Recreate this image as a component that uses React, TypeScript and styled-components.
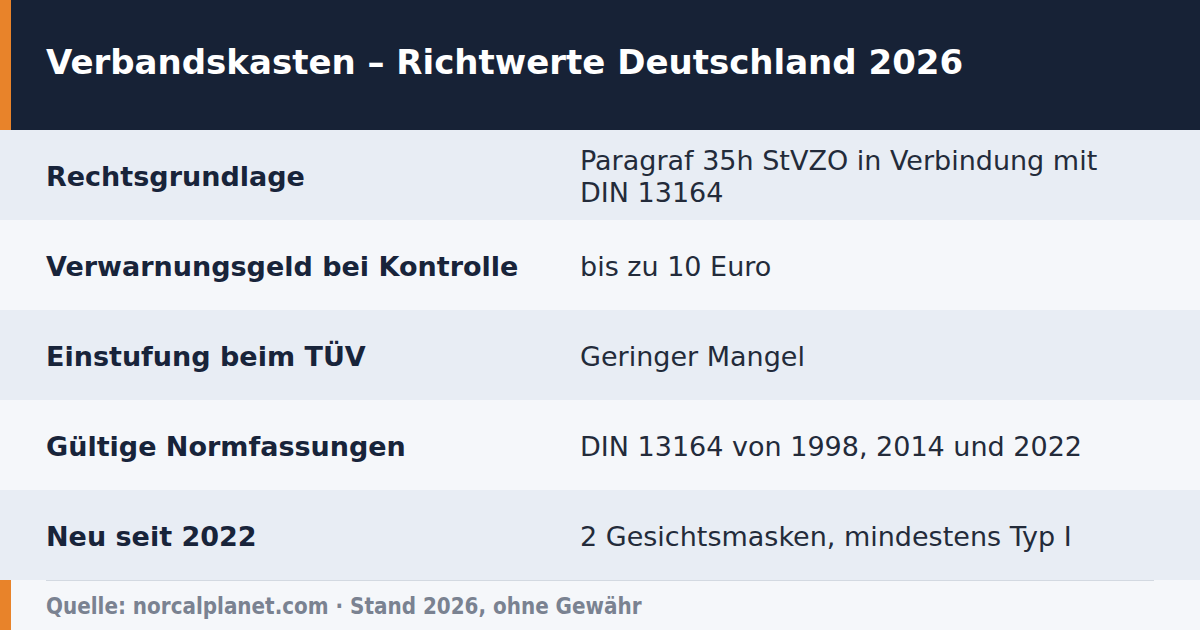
import React from "react";
import styled, { createGlobalStyle } from "styled-components";

const rows: [string, string][] = [
  ["Rechtsgrundlage", "Paragraf 35h StVZO in Verbindung mit DIN 13164"],
  ["Verwarnungsgeld bei Kontrolle", "bis zu 10 Euro"],
  ["Einstufung beim TÜV", "Geringer Mangel"],
  ["Gültige Normfassungen", "DIN 13164 von 1998, 2014 und 2022"],
  ["Neu seit 2022", "2 Gesichtsmasken, mindestens Typ I"],
];

export default function App() {
  return (
    <>
      <GlobalStyle />
      <Card>
        <Header>
          <Title>Verbandskasten – Richtwerte Deutschland 2026</Title>
        </Header>
        {rows.map(([label, value], i) => (
          <Row key={label} odd={i % 2 === 0}>
            <Label>{label}</Label>
            <Value>{value}</Value>
          </Row>
        ))}
        <Footer>
          <Source>Quelle: norcalplanet.com · Stand 2026, ohne Gewähr</Source>
        </Footer>
      </Card>
    </>
  );
}

const GlobalStyle = createGlobalStyle`
  body {
    margin: 0;
    font-family: "DejaVu Sans", sans-serif;
    background: #f5f7fa;
  }
`;

const Card = styled.div`
  width: 1200px;
  height: 630px;
  display: flex;
  flex-direction: column;
  overflow: hidden;
`;

const Header = styled.div`
  height: 130px;
  display: flex;
  align-items: center;
  background: #172236;
  border-left: 11px solid #e8832a;
  padding-left: 35px;
  box-sizing: border-box;
`;

const Title = styled.h1`
  margin: 0;
  font-size: 34px;
  font-weight: 700;
  color: #ffffff;
  padding-bottom: 6px;
`;

const Row = styled.div<{ odd: boolean }>`
  height: 90px;
  display: grid;
  grid-template-columns: 534px 1fr;
  align-items: center;
  padding-left: 46px;
  padding-right: 80px;
  box-sizing: border-box;
  background: ${({ odd }) => (odd ? "#e8edf4" : "#f5f7fa")};
`;

const Label = styled.div`
  font-size: 27px;
  font-weight: 700;
  color: #18243a;
  padding-top: 2px;
`;

const Value = styled.div`
  font-size: 27px;
  line-height: 32px;
  color: #232b3a;
  padding-top: 4px;
`;

const Footer = styled.div`
  flex: 1;
  display: flex;
  align-items: center;
  border-left: 11px solid #e8832a;
  padding-left: 35px;
  position: relative;
  &::before {
    content: "";
    position: absolute;
    top: 0;
    left: 35px;
    right: 46px;
    height: 1px;
    background: #d3d9e1;
  }
`;

const Source = styled.div`
  font-size: 22.2px;
  font-weight: 700;
  font-stretch: condensed;
  font-family: "DejaVu Sans Condensed", "DejaVu Sans", sans-serif;
  color: #7a8291;
  padding-top: 1px;
`;
